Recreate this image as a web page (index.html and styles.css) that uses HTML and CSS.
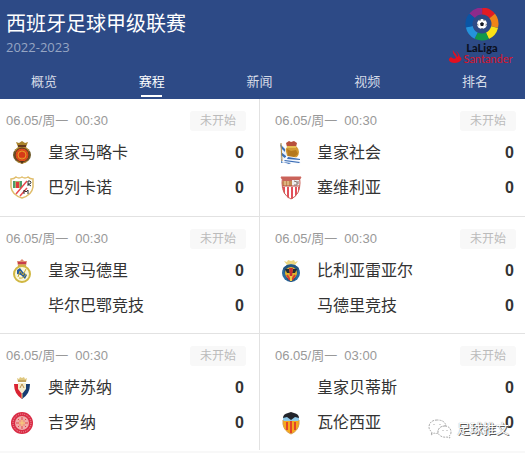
FILE: index.html
```html
<!DOCTYPE html>
<html lang="zh-CN">
<head>
<meta charset="utf-8">
<title>西班牙足球甲级联赛</title>
<link rel="stylesheet" href="styles.css">
</head>
<body>
<header class="league">
  <div class="league-top">
    <div class="league-text">
      <h1>西班牙足球甲级联赛</h1>
      <p class="season">2022-2023</p>
    </div>
    <svg class="league-logo" viewBox="0 0 66 56" role="img" aria-label="LaLiga Santander">
      <g fill="none" stroke-width="7">
        <circle cx="33" cy="16" r="13" stroke="#8e2a8b" pathLength="70" stroke-dasharray="10 60" transform="rotate(-140 33 16)"/>
        <circle cx="33" cy="16" r="13" stroke="#e41b23" pathLength="70" stroke-dasharray="10 60" transform="rotate(-89 33 16)"/>
        <circle cx="33" cy="16" r="13" stroke="#f08418" pathLength="70" stroke-dasharray="10 60" transform="rotate(-38 33 16)"/>
        <circle cx="33" cy="16" r="13" stroke="#fbe216" pathLength="70" stroke-dasharray="10 60" transform="rotate(14 33 16)"/>
        <circle cx="33" cy="16" r="13" stroke="#12984a" pathLength="70" stroke-dasharray="10 60" transform="rotate(65 33 16)"/>
        <circle cx="33" cy="16" r="13" stroke="#2493dc" pathLength="70" stroke-dasharray="10 60" transform="rotate(117 33 16)"/>
        <circle cx="33" cy="16" r="13" stroke="#0a55a5" pathLength="70" stroke-dasharray="10 60" transform="rotate(168 33 16)"/>
      </g>
      <circle cx="33" cy="16" r="5" fill="#fff"/>
      <path d="M33 14l2 1.500-.8 2.500h-2.400l-.8-2.500zM30 11.800l2-.5-1 1.700zM36 11.800l-2-.5 1 1.700zM28.300 16l1 2.500-.2-3zM37.700 16l-1 2.500.2-3zM32 20h2l-1 1z" fill="#151a26"/>
      <text x="33" y="44" text-anchor="middle" class="logo-name">LaLiga</text>
      <path d="M4 42c1 3 4 4 4 7 3-2 0-4-1-6 3 2 3 4 4 6 3 1 1 6-5 6s-8-4-4-6c2 2 4 2 5 1-1-3-4-4-3-8z" fill="#e30f20"/>
      <text x="39" y="55" text-anchor="middle" class="logo-sponsor">Santander</text>
    </svg>
  </div>
  <nav class="tabs">
    <a href="#overview">概览</a>
    <a href="#fixtures" class="active" aria-current="page">赛程</a>
    <a href="#news">新闻</a>
    <a href="#video">视频</a>
    <a href="#table">排名</a>
  </nav>
</header>
<main class="matches">
  <article class="match">
    <div class="info"><time>06.05/周一&nbsp; 00:30</time><span class="status">未开始</span></div>
    <div class="team">
      <svg class="crest" viewBox="0 0 24 24" aria-hidden="true">
        <path d="M6 1l3 1 3-2 3 2 3-1-2 5H8z" fill="#a9832c"/><path d="M8 4h8v2H8z" fill="#63391e"/>
        <ellipse cx="12" cy="14" rx="9" ry="8" fill="#6e5a2a"/><path d="M5 9l3-3h8l3 3-2 12-5 2-5-2z" fill="#b38b35"/>
        <circle cx="12" cy="14" r="7" fill="#dc4a1b" stroke="#5a3a20"/><circle cx="12" cy="14" r="4" fill="none" stroke="#e69a25"/>
        <path d="M10 12v4M12 11v5M14 12v4" stroke="#d22b17"/><path d="M10 20h4l-2 3z" fill="#51331c"/>
      </svg>
      <span class="name">皇家马略卡</span><b class="score">0</b>
    </div>
    <div class="team">
      <svg class="crest" viewBox="0 0 24 24" aria-hidden="true">
        <path d="M1 3q3 0 5-2 3 2 6 0 3 2 6 0 2 2 5 2v8q-1 8-11 11Q2 19 1 11z" fill="#fff" stroke="#e0bd6a" stroke-width="1.500"/>
        <path d="M3 5h9v7H3z" fill="#a8b46b"/><path d="M3 5h2v7H3zM10 5h2v7h-2z" fill="#4e9c6c"/><path d="M6 6h3v6H6z" fill="#df383d"/>
        <path d="M17 5L6 18M17 12L10 20" stroke="#e8484e" stroke-width="1.500"/>
        <path d="M18 10V5h2q2 1 0 3h-2l3 2M14 18v-4l2 2 2-2v4" fill="none" stroke="#303030"/>
      </svg>
      <span class="name">巴列卡诺</span><b class="score">0</b>
    </div>
  </article>
  <article class="match">
    <div class="info"><time>06.05/周一&nbsp; 00:30</time><span class="status">未开始</span></div>
    <div class="team">
      <svg class="crest" viewBox="0 0 24 24" aria-hidden="true">
        <circle cx="13" cy="11" r="7" fill="#d29a35"/><path d="M7 2l3-2 2 1 3-1 3 2-1 4H8z" fill="#b8503b"/><path d="M8 5h9v2H8z" fill="#e8be53"/>
        <path d="M8 8l4 2 5-1 2 4-4 3-6-1z" fill="#b5791f"/>
        <path d="M1 2l5 5 3 11-5 3-3-3z" fill="#e9f1fb"/><path d="M1 3l5 5v3L2 7zM2 11l5 4v3l-5-4zM2 18l3 3-3 1z" fill="#3a70b5"/>
        <path d="M8 15l13 2-1 2 2 3-2 1-6-1-5 2-7-4z" fill="#f5f9ff"/><path d="M9 16l12 2v1L8 18zM6 19l15 2-1 1-15-2zM4 21l8 1-2 1z" fill="#3a6cb4"/><path d="M2 2l1 18" stroke="#b18b43"/>
      </svg>
      <span class="name">皇家社会</span><b class="score">0</b>
    </div>
    <div class="team">
      <svg class="crest" viewBox="0 0 24 24" aria-hidden="true">
        <clipPath id="sevilla"><path d="M2 1h20q-2 2-1 6 0 12-9 17Q3 19 3 7q1-4-1-6z"/></clipPath>
        <g clip-path="url(#sevilla)"><path d="M0 0h24v24H0z" fill="#fff"/><path d="M0 0h24v5H0z" fill="#c9635a"/><path d="M3 5h10v5H3z" fill="#c48a51"/><path d="M6 5v5M9 5v5" stroke="#f5d9b1"/><path d="M13 4h9v6h-9z" fill="#eee"/>
        <path d="M5 11v10M9 11v12M13 11v12M17 11v11M20 11v8" stroke="#e2505a" stroke-width="2"/><path d="M3 10h19" stroke="#b3483e"/></g>
        <path d="M15 5l3 1v3h-3M19 5v3" fill="none" stroke="#887770"/>
        <path d="M2 1h20q-2 2-1 6 0 12-9 16Q3 19 3 7q1-4-1-6z" fill="none" stroke="#cc6258"/>
      </svg>
      <span class="name">塞维利亚</span><b class="score">0</b>
    </div>
  </article>
  <article class="match">
    <div class="info"><time>06.05/周一&nbsp; 00:30</time><span class="status">未开始</span></div>
    <div class="team">
      <svg class="crest" viewBox="0 0 24 24" aria-hidden="true">
        <path d="M7 2l3 0 2-2 2 2h3l-1 5H8z" fill="#df8a70"/><path d="M8 3h8v2H8z" fill="#c83d4b"/><path d="M8 6h8" stroke="#ccb14a"/>
        <circle cx="12" cy="15" r="8" fill="#faf7da" stroke="#d0b742" stroke-width="2"/>
        <path d="M7 11l3-2 3 4 4 3-2 4-4-4-4-1z" fill="#235ca2"/><path d="M8 18l2-6 3 4 3-6M9 19q5 1 7-4" fill="none" stroke="#c7a934"/>
      </svg>
      <span class="name">皇家马德里</span><b class="score">0</b>
    </div>
    <div class="team"><span class="crest"></span><span class="name">毕尔巴鄂竞技</span><b class="score">0</b></div>
  </article>
  <article class="match">
    <div class="info"><time>06.05/周一&nbsp; 00:30</time><span class="status">未开始</span></div>
    <div class="team">
      <svg class="crest" viewBox="0 0 24 24" aria-hidden="true">
        <path d="M5 2l3 1 1-2 3 1 3-1 1 2 3-1-3 4H8z" fill="#ecd681"/>
        <circle cx="12" cy="14" r="9" fill="#2b6ca0"/><path d="M4 9l4-3h8l4 3-4 12-4 2-4-2z" fill="#245681"/>
        <circle cx="12" cy="14" r="6" fill="#e1b52c"/><path d="M6 10h4l1 4H8zM18 10h-4l-1 4h3z" fill="#242d31"/><path d="M10 9h4l-1 9h-2z" fill="#c92f32"/>
        <path d="M8 16l3 5M16 16l-3 5" stroke="#d73c32" stroke-width="2"/><path d="M12 17v5" stroke="#f0ce42" stroke-width="2"/>
      </svg>
      <span class="name">比利亚雷亚尔</span><b class="score">0</b>
    </div>
    <div class="team"><span class="crest"></span><span class="name">马德里竞技</span><b class="score">0</b></div>
  </article>
  <article class="match">
    <div class="info"><time>06.05/周一&nbsp; 00:30</time><span class="status">未开始</span></div>
    <div class="team">
      <svg class="crest" viewBox="0 0 24 24" aria-hidden="true">
        <path d="M7 2l2 1 1-2 2 1 2-1 1 2 2-1-1 4H8z" fill="#dfc77e"/><path d="M8 5h8" stroke="#a8823f"/>
        <path d="M4 8h8v15Q4 18 4 8z" fill="#d92332"/><path d="M12 8h8q0 10-8 15z" fill="#173b70"/>
        <path d="M8 7h8v6l-4 5-4-5z" fill="#f6edce"/><path d="M10 12l2-4 2 4" fill="none" stroke="#b78c4b"/><path d="M12 18v4" stroke="#ebd480"/>
      </svg>
      <span class="name">奥萨苏纳</span><b class="score">0</b>
    </div>
    <div class="team">
      <svg class="crest" viewBox="0 0 24 24" aria-hidden="true">
        <circle cx="12" cy="12" r="11" fill="#d92b44"/><circle cx="12" cy="12" r="9" fill="none" stroke="#f2a3ad" stroke-dasharray="1 1"/>
        <circle cx="12" cy="12" r="7" fill="#f0abaa"/><path d="M12 6v12M6 12h12M8 8l8 8M16 8l-8 8" stroke="#df4a48"/><path d="M9 9h6v6H9z" fill="#ee9b88"/><path d="M12 9v6M9 12h6" stroke="#f7d078"/>
      </svg>
      <span class="name">吉罗纳</span><b class="score">0</b>
    </div>
  </article>
  <article class="match">
    <div class="info"><time>06.05/周一&nbsp; 03:00</time><span class="status">未开始</span></div>
    <div class="team"><span class="crest"></span><span class="name">皇家贝蒂斯</span><b class="score">0</b></div>
    <div class="team">
      <svg class="crest" viewBox="0 0 24 24" aria-hidden="true">
        <path d="M4 8h16v5q-1 7-8 10-7-3-8-10z" fill="#f6a91b"/><path d="M8 11v8M12 10v12M16 11v8" stroke="#e2452a" stroke-width="2"/>
        <path d="M4 6h16v4H4z" fill="#8fc9e8"/><path d="M4 7q0-4 5-5l3-1 3 1q5 1 5 5l-4-1-4 3-4-3z" fill="#22242b"/><path d="M4 9v4q1 7 8 10 7-3 8-10V9" fill="none" stroke="#d79a4c"/>
      </svg>
      <span class="name">瓦伦西亚</span><b class="score">0</b>
    </div>
  </article>
  <div class="watermark">
    <svg viewBox="0 0 24 20" aria-hidden="true">
      <path d="M9 1C4 1 1 4 1 8q0 3 3 5l-1 3 3-2q2 1 4 0 0-7 8-7-1-6-9-6z"/>
      <path d="M17 7c-4 0-7 2-7 6 0 3 4 6 9 5l3 1-1-2q2-1 2-4c0-4-3-6-6-6z"/>
      <path d="M6 5v1M12 5v1M15 11v1M19 11v1"/>
    </svg>
    <span>足球推文</span>
  </div>
</main>
</body>
</html>
```
FILE: styles.css
```css
* { box-sizing: border-box; }

body {
  margin: 0;
  background: #f8f8f8;
  color: #333;
  font-family: "Liberation Sans", "Noto Sans CJK SC", sans-serif;
}

.league { background: #2d4a86; color: #fff; }

.league-top {
  display: flex;
  justify-content: space-between;
  height: 68px;
  padding: 8px 10px 0 6px;
}

h1 {
  margin: 0;
  font-size: 20px;
  font-weight: 400;
  line-height: 32px;
}

.season {
  margin: 0;
  color: #96a5c3;
  font-family: "Open Sans", sans-serif;
  font-size: 13px;
  line-height: 14px;
}

.league-logo { width: 66px; height: 56px; }
.logo-name { font: 900 11px "Lato", sans-serif; fill: #0b1020; }
.logo-sponsor { font: 400 11px "Lato", sans-serif; fill: #d9142b; }

.tabs {
  display: flex;
  justify-content: space-between;
  padding: 0 37px 0 31px;
}

.tabs a {
  display: flex;
  flex-direction: column;
  align-items: center;
  height: 31px;
  color: #d5dbe7;
  font-size: 13px;
  line-height: 27px;
  text-decoration: none;
}

.tabs .active { color: #fff; }
.tabs .active::after { content: ""; width: 21px; height: 2px; background: #fff; }

.matches {
  position: relative;
  display: grid;
  grid-template-columns: 260fr 265fr;
  padding-bottom: 1px;
  background: #fff;
}

.match {
  min-height: 117px;
  padding: 11px 9px 0 15px;
}

.match:nth-child(odd) {
  padding: 11px 13px 0 6px;
  border-right: 1px solid #e2e2e2;
}

.match:nth-child(n + 3) { border-top: 1px solid #e2e2e2; }

.info {
  display: flex;
  align-items: center;
  justify-content: space-between;
  height: 22px;
  margin-bottom: 3px;
  color: #999;
  font-size: 13px;
}

.info time { padding-bottom: 3px; }

.status {
  width: 56px;
  border-radius: 3px;
  background: #f8f8f8;
  color: #bbb;
  font-size: 12px;
  line-height: 20px;
  text-align: center;
}

.team {
  display: flex;
  align-items: center;
  height: 35px;
  padding: 0 2px 0 4px;
  font-size: 16px;
}

.crest { width: 24px; height: 24px; margin-right: 14px; }
.name { flex: 1; padding-bottom: 3px; }

.watermark {
  position: absolute;
  right: 16px;
  bottom: 12px;
  display: flex;
  align-items: center;
  gap: 5px;
  color: #fff;
  font-size: 13px;
  line-height: 20px;
  text-shadow: 1px 1px 0 #555, 0 0 1px #777;
}

.watermark svg {
  width: 24px;
  height: 20px;
  fill: #fff;
  stroke: #aaa;
  stroke-dasharray: 2 1;
}
```
